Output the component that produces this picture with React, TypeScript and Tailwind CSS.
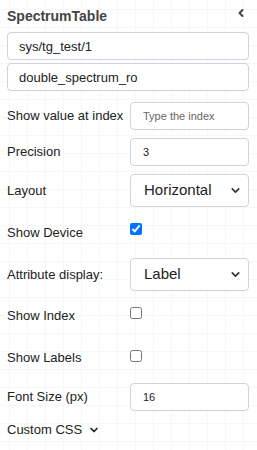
import { ChevronDown, ChevronLeft } from 'lucide-react'

const font = { fontFamily: '"Liberation Sans", Arial, sans-serif' }

function Row({ label, children, h = 'h-[28px]' }: { label: string; children: React.ReactNode; h?: string }) {
  return (
    <div className={`flex items-center ${h}`}>
      <div className="w-[123px] shrink-0 text-[13px] text-[#222]">{label}</div>
      <div className="flex-1">{children}</div>
    </div>
  )
}

function TextInput({ value, placeholder }: { value?: string; placeholder?: string }) {
  return (
    <input
      defaultValue={value}
      placeholder={placeholder}
      className="h-[28px] w-full rounded-[4px] border border-[#ced4da] bg-white px-[12px] text-[11px] text-[#222] placeholder:text-[#666] outline-none"
    />
  )
}

function Select({ value }: { value: string }) {
  return (
    <div className="relative h-[33px] w-full">
      <select
        defaultValue={value}
        className="h-full w-full appearance-none rounded-[4px] border border-[#ced4da] bg-white pl-[13px] text-[15px] text-[#222] outline-none"
      >
        <option>{value}</option>
      </select>
      <ChevronDown size={13} strokeWidth={3} className="pointer-events-none absolute right-[7px] top-[10px] text-[#333]" />
    </div>
  )
}

export default function App() {
  return (
    <div
      style={font}
      className="h-[450px] w-[257px] overflow-hidden bg-white bg-[linear-gradient(#f7f7f7_1px,transparent_1px),linear-gradient(90deg,#f7f7f7_1px,transparent_1px)] bg-[length:18px_18px] bg-[position:9px_9px] px-[7px] pr-[8px]"
    >
      <div className="flex h-[32px] items-center justify-between">
        <span className="text-[14px] font-bold text-[#444]">SpectrumTable</span>
        <ChevronLeft size={12} strokeWidth={4} className="mr-[2px] -mt-[7px] text-[#444]" />
      </div>

      <div className="flex flex-col gap-[3px]">
        <input
          defaultValue="sys/tg_test/1"
          className="h-[28px] w-full rounded-[4px] border border-[#ced4da] bg-white px-[11px] text-[13px] text-[#222] outline-none"
        />
        <input
          defaultValue="double_spectrum_ro"
          className="h-[28px] w-full rounded-[4px] border border-[#ced4da] bg-white px-[11px] text-[13px] text-[#222] outline-none"
        />
      </div>

      <div className="mt-[11px] flex flex-col gap-[8px]">
        <Row label="Show value at index">
          <TextInput placeholder="Type the index" />
        </Row>
        <Row label="Precision">
          <TextInput value="3" />
        </Row>
        <Row label="Layout" h="h-[33px]">
          <Select value="Horizontal" />
        </Row>
        <Row label="Show Device" h="h-[35px]">
          <input type="checkbox" defaultChecked className="-mt-[7px] block h-[12px] w-[12px] accent-[#0075ff]" />
        </Row>
        <Row label="Attribute display:" h="h-[33px]">
          <Select value="Label" />
        </Row>
        <Row label="Show Index" h="h-[34px]">
          <input type="checkbox" className="-mt-[6px] block h-[12px] w-[12px]" />
        </Row>
        <Row label="Show Labels" h="h-[34px]">
          <input type="checkbox" className="-mt-[4px] block h-[12px] w-[12px]" />
        </Row>
        <Row label="Font Size (px)">
          <TextInput value="16" />
        </Row>
      </div>

      <div className="mt-[5px] flex h-[28px] items-center gap-[6px] text-[13px] text-[#222]">
        Custom CSS
        <ChevronDown size={12} strokeWidth={3.5} className="text-[#222]" />
      </div>
    </div>
  )
}
